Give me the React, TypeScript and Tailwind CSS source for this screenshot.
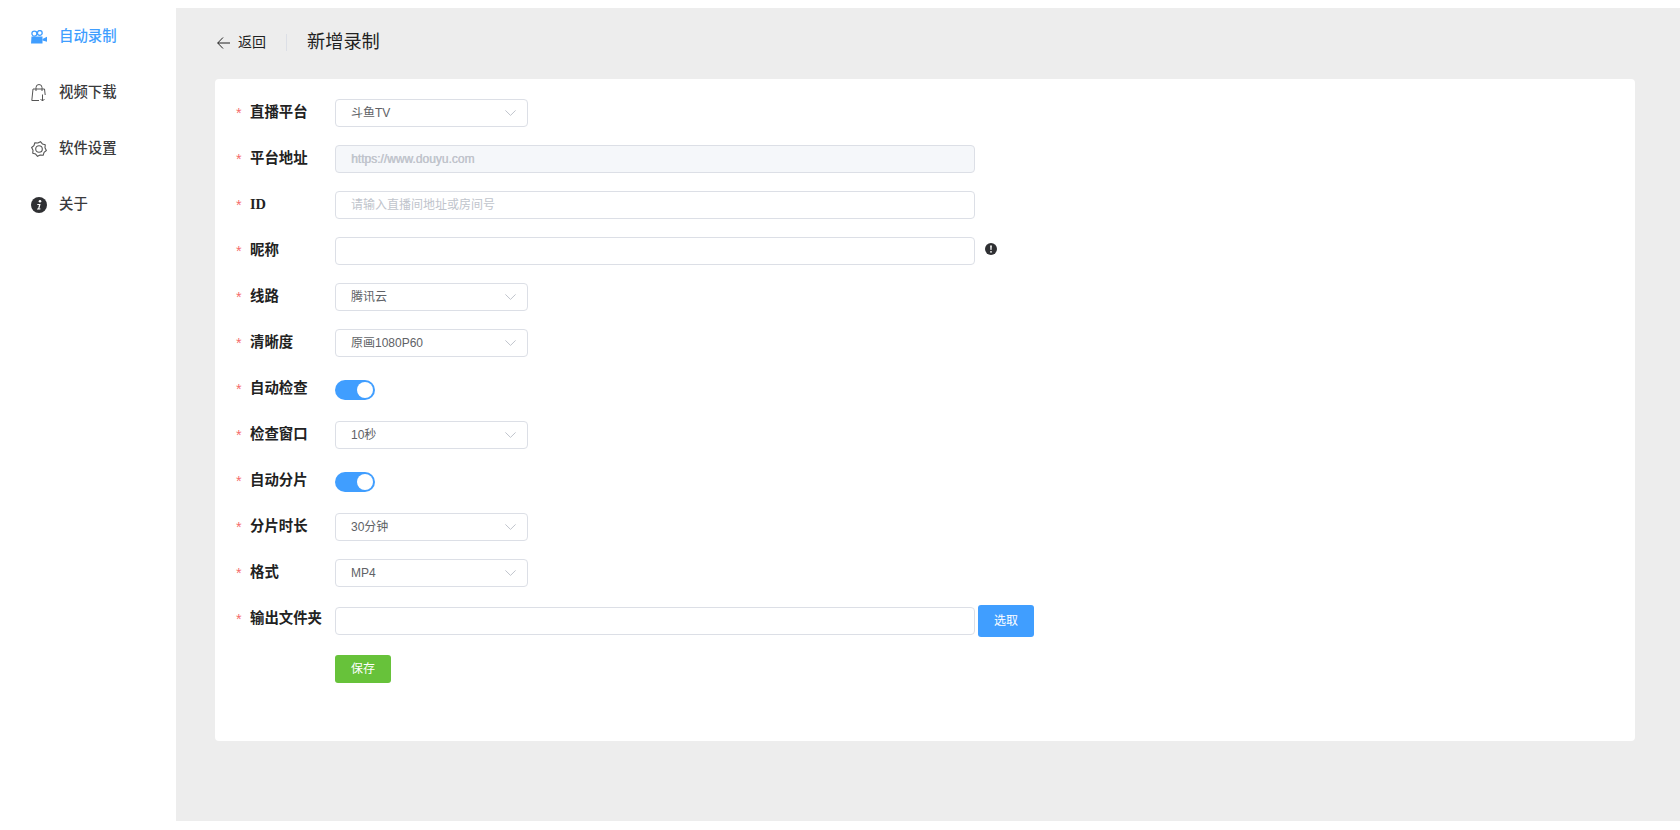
import React from 'react';

const fontStack = "font-['Liberation_Sans','Noto_Sans_CJK_SC',sans-serif]";

function CameraIcon() {
  return (
    <svg viewBox="0 0 16 14" className="h-[14px] w-[16px] text-[#409eff]" fill="currentColor">
      <circle cx="3.4" cy="3.6" r="2.5" fill="none" stroke="currentColor" strokeWidth="1.3" />
      <circle cx="8.8" cy="2.9" r="2.4" fill="none" stroke="currentColor" strokeWidth="1.3" />
      <path d="M0.5 6.5h11v7h-11.5z" />
      <path d="M11.5 9l4.5-2.2v5l-4.5-1.4z" />
    </svg>
  );
}

function BagIcon() {
  return (
    <svg viewBox="0 0 16 18" className="h-[18px] w-[16px] text-[#555]" fill="none" stroke="currentColor" strokeWidth="1">
      <path d="M5 7V3.5a3 3 0 0 1 6 0V7" />
      <path d="M8 16.5H0.8L2 5h11.5l.7 6" />
      <path d="M11.5 10.5v6.5M9.5 15l2 2 2-2" />
    </svg>
  );
}

// eight rounded teeth around the hub
const gearPoints = Array.from({ length: 16 }, (_, i) => {
  const angle = (i * Math.PI) / 8 + Math.PI / 16;
  const radius = i % 2 === 0 ? 7.5 : 6.1;
  return `${(8 + radius * Math.cos(angle)).toFixed(2)},${(8 + radius * Math.sin(angle)).toFixed(2)}`;
}).join(' ');

function GearIcon() {
  return (
    <svg viewBox="0 0 16 16" className="h-4 w-4 text-[#555]" fill="none" stroke="currentColor" strokeWidth="1.1">
      <polygon points={gearPoints} strokeLinejoin="round" />
      <circle cx="8" cy="8" r="3.3" />
    </svg>
  );
}

function InfoIcon() {
  return (
    <svg viewBox="0 0 16 16" className="h-4 w-4">
      <circle cx="8" cy="8" r="8" fill="#2f3033" />
      <circle cx="9" cy="4.2" r="1.3" fill="#fff" />
      <path d="M6.4 7h3.2L8.4 11.6h1.2l-.3 1H5.9l.3-1h.9l.9-3.6H6.2z" fill="#fff" />
    </svg>
  );
}

function WarnIcon() {
  return (
    <svg viewBox="0 0 12 12" className="h-3 w-3">
      <circle cx="6" cy="6" r="6" fill="#2f3033" />
      <path d="M5.1 2.4h1.8L6.5 7h-1z" fill="#fff" />
      <circle cx="6" cy="8.8" r="0.9" fill="#fff" />
    </svg>
  );
}

const navItems = [
  { label: '自动录制', icon: <CameraIcon />, active: true },
  { label: '视频下载', icon: <BagIcon />, active: false },
  { label: '软件设置', icon: <GearIcon />, active: false },
  { label: '关于', icon: <InfoIcon />, active: false },
];

function Sidebar() {
  return (
    <aside className="flex w-[176px] shrink-0 flex-col pt-[9px]">
      {navItems.map((item) => (
        <div key={item.label} className="flex h-[56px] items-center pl-[31px]">
          <span className="flex w-[28px] items-center">{item.icon}</span>
          <span className={`text-[14.4px] font-medium ${item.active ? 'text-[#409eff]' : 'text-[#3a3a3c]'}`}>{item.label}</span>
        </div>
      ))}
    </aside>
  );
}

function Row({ label, children, className = '' }: { label: string; children: React.ReactNode; className?: string }) {
  return (
    <div className={`flex h-[28px] ${className}`}>
      <div className="flex h-[28px] w-[120px] shrink-0 items-start pl-[21px] font-['Liberation_Serif','Noto_Sans_CJK_SC',serif] text-[14.4px] font-semibold leading-[26px] text-[#222]">
        <span className="w-[14px] font-['Liberation_Sans'] font-normal leading-[29px] text-[#f56c6c]">*</span>
        <span>{label}</span>
      </div>
      {children}
    </div>
  );
}

function SelectBox({ value }: { value: string }) {
  return (
    <div className="flex h-[28px] w-[193px] items-center justify-between rounded border border-[#dcdfe6] bg-white pl-[15px] pr-[11px] text-xs text-[#606266]">
      <span>{value}</span>
      <svg viewBox="0 0 11 6" className="h-[6px] w-[11px] text-[#c0c4cc]" fill="none" stroke="currentColor">
        <path d="M0.4 0.4 5.5 5.4 10.6 0.4" />
      </svg>
    </div>
  );
}

function TextBox({ value = '', placeholder = '', disabled = false }: { value?: string; placeholder?: string; disabled?: boolean }) {
  return (
    <input
      readOnly
      value={value}
      placeholder={placeholder}
      className={`h-[28px] w-[640px] rounded border border-[#dcdfe6] px-[15px] text-xs outline-none placeholder:text-[#c0c4cc] ${
        disabled ? 'bg-[#f5f7fa] text-[#c0c4cc] [text-shadow:0.4px_0_0_#c0c4cc]' : 'bg-white text-[#606266]'
      }`}
    />
  );
}

function Toggle() {
  return (
    <div className="mt-[5px] flex h-[20px] w-[40px] items-center justify-end rounded-full bg-[#409eff] pr-[2px]">
      <div className="h-4 w-4 rounded-full bg-white" />
    </div>
  );
}

export default function App() {
  return (
    <div className={`flex h-[830px] w-[1680px] overflow-hidden bg-white ${fontStack}`}>
      <Sidebar />
      <main className="mb-[9px] mt-2 flex flex-1 flex-col bg-[#ededed] pl-[39px] pr-[45px]">
        <div className="flex h-[71px] items-center pb-[2px] pl-[2px] font-['Liberation_Serif','Noto_Sans_CJK_SC',serif] text-[#222]">
          <svg viewBox="0 0 13 12" className="h-[12px] w-[13px]" fill="none" stroke="currentColor">
            <path d="M6 0.5 0.7 6 6 11.5M0.7 6H13" />
          </svg>
          <span className="ml-2 text-sm">返回</span>
          <span className="ml-[20px] h-[17px] w-px bg-[#dcdfe6]" />
          <span className="ml-[20px] text-[18.2px]">新增录制</span>
        </div>
        <section className="flex h-[662px] flex-col gap-[18px] rounded bg-white pt-5">
          <Row label="直播平台"><SelectBox value="斗鱼TV" /></Row>
          <Row label="平台地址"><TextBox disabled value="https://www.douyu.com" /></Row>
          <Row label="ID"><TextBox placeholder="请输入直播间地址或房间号" /></Row>
          <Row label="昵称">
            <TextBox />
            <span className="ml-[10px] mt-[6px]"><WarnIcon /></span>
          </Row>
          <Row label="线路"><SelectBox value="腾讯云" /></Row>
          <Row label="清晰度"><SelectBox value="原画1080P60" /></Row>
          <Row label="自动检查"><Toggle /></Row>
          <Row label="检查窗口"><SelectBox value="10秒" /></Row>
          <Row label="自动分片"><Toggle /></Row>
          <Row label="分片时长"><SelectBox value="30分钟" /></Row>
          <Row label="格式"><SelectBox value="MP4" /></Row>
          <Row label="输出文件夹" className="!h-[32px]">
            <div className="mt-[2px] flex">
              <TextBox />
            </div>
            <button className="ml-[3px] h-[32px] w-[56px] rounded-[3px] bg-[#409eff] text-xs text-white">选取</button>
          </Row>
          <div className="pl-[120px]">
            <button className="h-[28px] w-[56px] rounded-[3px] bg-[#67c23a] text-xs text-white">保存</button>
          </div>
        </section>
      </main>
    </div>
  );
}
